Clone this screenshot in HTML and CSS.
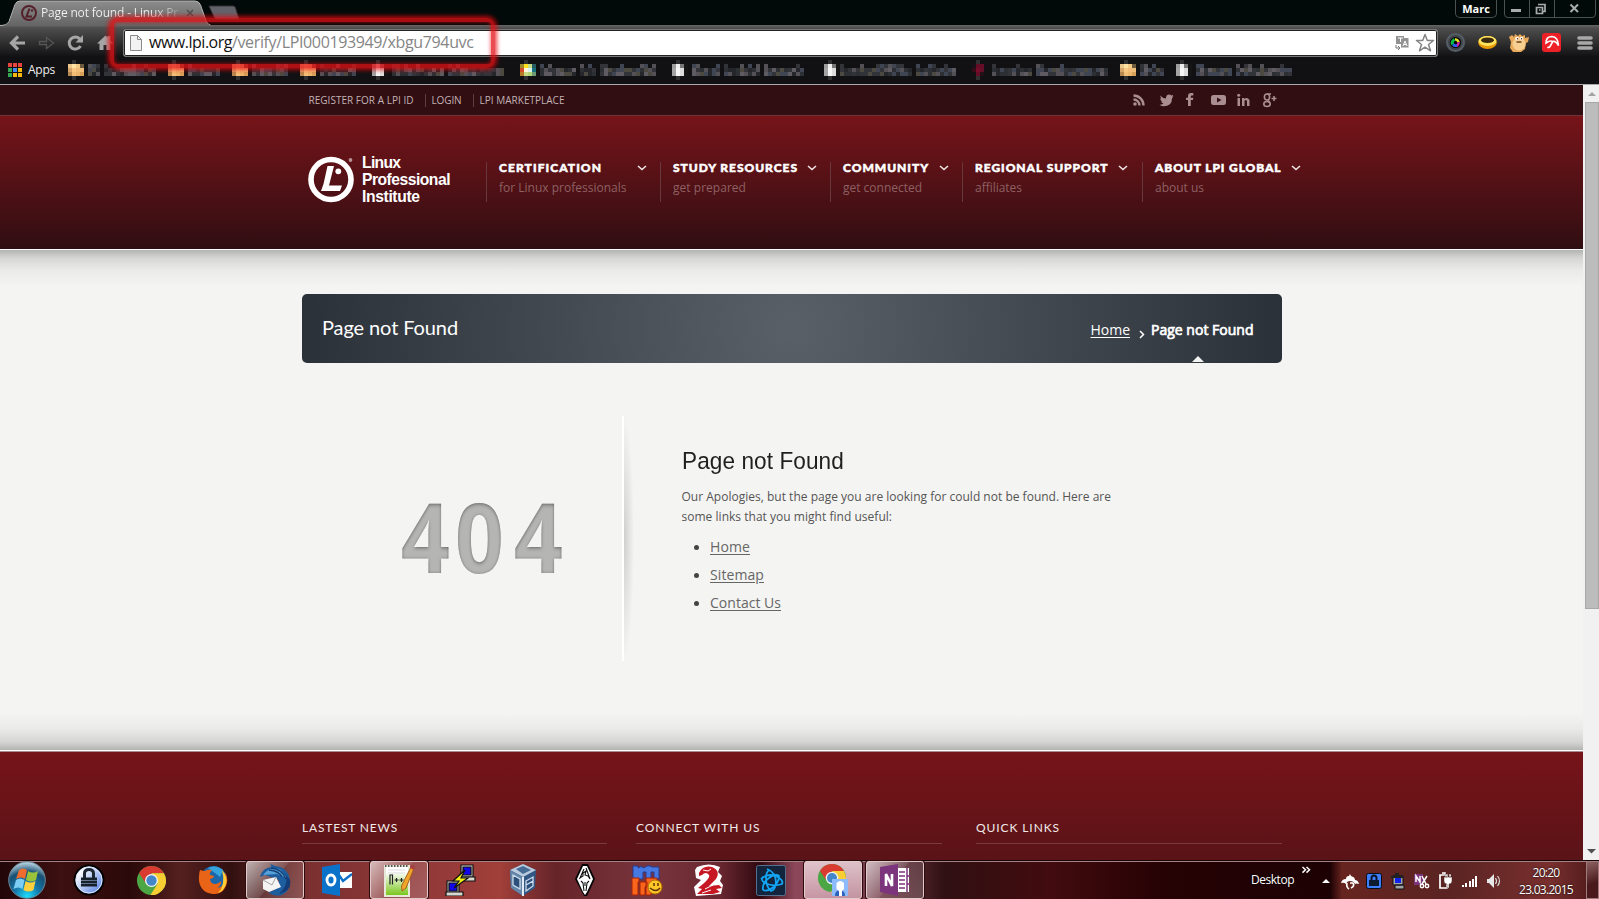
FILE: index.html
```html
<!DOCTYPE html>
<html lang="en">
<head>
<meta charset="utf-8">
<title>Page not found - Linux Professional Institute</title>
<link rel="stylesheet" href="styles.css">
</head>
<body>
<header class="browser">
  <div class="titlebar">
    <svg class="tabs" width="245" height="26" viewBox="0 0 245 26">
      <defs><linearGradient id="tabg" x1="0" y1="0" x2="0" y2="1"><stop offset="0" stop-color="#8c8c8c"/><stop offset="1" stop-color="#646464"/></linearGradient></defs>
      <path d="M209 6h24q2 0 2.500 2l3.500 11h-22q-2 0-3-2z" fill="#62626a" stroke="#333"/>
      <path d="M0 26q7 0 9-4l6-17q1.500-4 5-4h175q4 0 5.500 4l6 17q2 4 5 4z" fill="url(#tabg)"/>
      <path d="M0 25.500q7 0 9-4l6-17q1.500-3.500 5-3.500h175q4 0 5.500 4l6 17q2 3 4 3" fill="none" stroke="#b4b4b4"/>
      <circle cx="29" cy="13" r="7" fill="none" stroke="#54202a" stroke-width="2"/>
      <path d="M29.500 8.500l-3 8h5.500" fill="none" stroke="#54202a" stroke-width="2"/><circle cx="32" cy="10.500" r="1.200" fill="#54202a"/>
      <path d="M187 10l6 6m0-6l-6 6" stroke="#4b4b4b" stroke-width="1.400"/>
    </svg>
    <span class="tab-title" data-w="137">Page not found - Linux Pr</span>
    <span class="user">Marc</span>
    <svg class="winbtns" width="94" height="19" viewBox="0 0 94 19">
      <path d="M1.500 0v14q0 3.500 3.500 3.500h84q3.500 0 3.500-3.500V0M26.500 0v17M51.500 0v17" fill="none" stroke="#4b5050"/>
      <path d="M8 9h10v3H8z" fill="#a9acac"/>
      <path d="M35 4.500h7v7h-2.500M33.500 7.500h6v6h-6zM36 10h1.500" fill="none" stroke="#a9acac" stroke-width="1.700"/>
      <path d="M67.500 4.500l7.500 7.500m0-7.500L67.500 12" stroke="#a9acac" stroke-width="2"/>
    </svg>
  </div>
  <div class="toolbar">
    <svg class="navicons" width="113" height="33" viewBox="0 0 113 33" fill="none">
      <g stroke="#a6a6a6" stroke-width="3.200"><path d="M25 18H12M18 11.500L11.500 18l6.500 6.500"/></g>
      <g stroke="#555" stroke-width="1.300"><path d="M39.500 16.500h7v-4l7 5.500-7 5.500v-4h-7z"/></g>
      <path d="M80.500 21a6 6 0 1 1-.8-7" stroke="#a6a6a6" stroke-width="3"/><path d="M83 10v7.500h-7.500z" fill="#a6a6a6"/>
      <path d="M97 18.500l8.500-8 2 2V11h3v4.500l3 3h-3V25h-4v-5h-3v5h-4v-6.500z" fill="#a6a6a6"/>
    </svg>
    <div class="omnibox">
      <svg width="14" height="18" viewBox="0 0 14 18"><path d="M1.500 1.500h7l4 4v11h-11z" fill="#f2f2f2" stroke="#8b8b8b"/><path d="M8.500 1.500v4h4" fill="none" stroke="#8b8b8b"/></svg>
      <span class="url"><span class="host" data-w="83">www.lpi.org</span><span data-w="241.500">/verify/LPI000193949/xbgu794uvc</span></span>
      <svg class="omni-icons" width="42" height="20" viewBox="0 0 42 20">
        <path d="M1 3h8v2h4.500v9.500H6V11H1z" fill="#929292"/><path d="M3 5h5M5.500 5v4M8 13l2-5 2 5M9 11.500h2" stroke="#fff" fill="none"/><path d="M1 12v3h4m-2-2l2 2-2 2" stroke="#777" fill="none"/>
        <path d="M30 1.500l2.300 6h6.200l-5 4 2 6.300-5.500-3.700-5.500 3.700 2-6.300-5-4h6.200z" fill="#fff" stroke="#858585" stroke-width="1.500" stroke-linejoin="round"/>
      </svg>
    </div>
    <svg class="ext" width="160" height="33" viewBox="1439 0 160 33">
      <circle cx="1455.500" cy="17.500" r="8.500" fill="#3e4448" stroke="#555e66" stroke-width="2"/><circle cx="1455.500" cy="17.500" r="5.500" fill="#050505"/>
      <path d="M1452.500 19.500a4 4 0 0 1 2-5" stroke="#06c04a" stroke-width="3" fill="none"/><path d="M1455 14.200a4 4 0 0 1 3.500 3" stroke="#e0e020" stroke-width="2.500" fill="none"/><path d="M1458.500 17a4 4 0 0 1-2 4" stroke="#d01fa0" stroke-width="2.500" fill="none"/><path d="M1457 20.500a4 4 0 0 1-4-1" stroke="#2c64ff" stroke-width="2.500" fill="none"/>
      <ellipse cx="1487.500" cy="17.500" rx="9.300" ry="6.500" fill="#e89a08"/><ellipse cx="1487.500" cy="16" rx="9" ry="5" fill="#ffe45b"/><ellipse cx="1487.500" cy="15.300" rx="6.500" ry="2.800" fill="#3a2a10"/>
      <path d="M1511 17l-2-5 3-2 2 2 1-3 3 2 2-2 2 2 3-1v3l4-1-1 5-2 1-1 6-4 3h-8l-3-4z" fill="#e9a95b"/><ellipse cx="1519" cy="19" rx="6.500" ry="6.500" fill="#f8cf90"/><circle cx="1517" cy="13.500" r="1.700" fill="#fff"/><circle cx="1521.500" cy="13.500" r="1.700" fill="#fff"/><path d="M1517.500 13v1.500m4-1.500v1.500m-5 2.500h5" stroke="#6a4322" stroke-width="1.300"/>
      <rect x="1542" y="8" width="19" height="19" rx="3" fill="#ed1f27"/><path d="M1546 18q0-6.500 6-6.500 6 .5 6.500 9-3-5-5.500-4-3-1.500-7 1.500zM1552.500 17l-2.500 4.500q-1 1.500-2.500.5" fill="none" stroke="#fff" stroke-width="1.600"/>
      <path d="M1579 13h12m-12 5h12m-12 5h12" stroke="#a8a8a8" stroke-width="3.600" stroke-linecap="round"/>
    </svg>
  </div>
  <div class="bookmarks">
    <svg class="apps" width="14" height="14" viewBox="0 0 14 14"><path d="M0 0h4v4H0zM5 0h4v4H5zM10 0h4v4h-4z" fill="#e8453c"/><path d="M0 5h4v4H0zM0 10h4v4H0z" fill="#34a853"/><path d="M5 5h4v4H5z" fill="#3f8cf3"/><path d="M5 10h4v4H5zM10 5h4v4h-4zM10 10h4v4h-4z" fill="#f6b90c"/></svg>
    <span class="apps-label" data-w="27">Apps</span>
    <svg id="mosaic" width="1300" height="26" viewBox="60 58 1300 26" shape-rendering="crispEdges"></svg>
  </div>
  <div class="highlight"></div>
</header>

<div class="viewport">
  <main class="page">
    <div class="topbar">
      <nav class="toplinks"><a data-w="105">REGISTER FOR A LPI ID</a><a data-w="30">LOGIN</a><a data-w="85">LPI MARKETPLACE</a></nav>
      <svg class="social" width="150" height="16" viewBox="1131 92 150 16" fill="#a98d90">
        <circle cx="1135" cy="104" r="1.800"/><path d="M1133.500 99.500a6 6 0 0 1 6 6M1133.500 95.500a10 10 0 0 1 10 10" fill="none" stroke="#a98d90" stroke-width="2.400"/>
        <path d="M1160 95.500q3 3 6 3 0-4 3-4 1.500 0 2.300 1l2-.8-1 2 1.200-.2-1.500 1.700q0 7.500-7.500 8-3 0-5-1.500 2.500 0 4-1.200-2-.3-2.500-2h1.200q-2-1-2-3h1z"/>
        <path d="M1188 106v-6h-2v-2.300h2v-1.500q0-3.200 3-3.200h2.300v2.400h-1.500q-1 0-1 1v1.300h2.500l-.3 2.300h-2.200v6z"/>
        <path fill-rule="evenodd" d="M1213.500 95h10q2.500 0 2.500 2.500v5q0 2.500-2.500 2.500h-10q-2.500 0-2.500-2.500v-5q0-2.500 2.500-2.500zM1217 97.500v5l4.500-2.500z"/>
        <path d="M1237.500 98h2.500v8h-2.500zM1242 98h2.300v1q3-2.300 5.200 1v6h-2.500v-4.500q-.5-2.500-2.500-.7v5.200h-2.500z"/><circle cx="1238.700" cy="95.300" r="1.500"/>
        <g fill="none" stroke="#a98d90" stroke-width="1.600"><ellipse cx="1267" cy="97" rx="2.600" ry="3"/><ellipse cx="1267" cy="104" rx="3.200" ry="2.500"/><path d="M1267 94h4M1268 100l1.500 2.500M1271.500 98.500h5m-2.500-2.500v5"/></g>
      </svg>
    </div>
    <div class="header">
      <svg class="logo" width="148" height="50" viewBox="306 154 148 50">
        <circle cx="331" cy="179.500" r="20" fill="none" stroke="#fff" stroke-width="5.600"/>
        <path d="M327.500 166h6.500l-5 19.500h13l-2 5.500h-19l2.500-7z" fill="#fff"/><circle cx="338.300" cy="171.300" r="2.900" fill="#fff"/>
        <circle cx="350.500" cy="160" r="1.900" fill="#b78f92" />
        <g class="logotext"><text x="362" y="168" textLength="39">Linux</text><text x="362" y="185" textLength="88.500">Professional</text><text x="362" y="202" textLength="58">Institute</text></g>
      </svg>
      <nav class="menu">
        <a class="m1"><b><i data-w="103">CERTIFICATION</i><svg width="10" height="6"><path d="M1 1l4 3.500L9 1"/></svg></b><span data-w="127.500">for Linux professionals</span></a>
        <a class="m2"><b><i data-w="125">STUDY RESOURCES</i><svg width="10" height="6"><path d="M1 1l4 3.500L9 1"/></svg></b><span data-w="73">get prepared</span></a>
        <a class="m3"><b><i data-w="86">COMMUNITY</i><svg width="10" height="6"><path d="M1 1l4 3.500L9 1"/></svg></b><span data-w="79">get connected</span></a>
        <a class="m4"><b><i data-w="133.500">REGIONAL SUPPORT</i><svg width="10" height="6"><path d="M1 1l4 3.500L9 1"/></svg></b><span data-w="47">affiliates</span></a>
        <a class="m5"><b><i data-w="126.500">ABOUT LPI GLOBAL</i><svg width="10" height="6"><path d="M1 1l4 3.500L9 1"/></svg></b><span data-w="49">about us</span></a>
      </nav>
    </div>
    <section class="content">
      <div class="banner">
        <h1 data-w="136">Page not Found</h1>
        <div class="crumbs"><a data-w="39.500">Home</a><svg width="6" height="9"><path d="M1 1l3.500 3.500L1 8" fill="none" stroke="#fff" stroke-width="1.500"/></svg><strong data-w="102.500">Page not Found</strong></div>
      </div>
      <div class="error">
        <svg class="big404" width="180" height="160" viewBox="392 454 180 160">
          <defs><filter id="inset" x="-5%" y="-5%" width="110%" height="110%"><feComponentTransfer in="SourceAlpha" result="inv"><feFuncA type="table" tableValues="1 0"/></feComponentTransfer><feGaussianBlur in="inv" stdDeviation="2"/><feOffset dx="0" dy="1"/><feComposite in2="SourceAlpha" operator="in" result="sh"/><feFlood flood-color="#4e4e4c"/><feComposite in2="sh" operator="in" result="s2"/><feMerge><feMergeNode in="SourceGraphic"/><feMergeNode in="s2"/></feMerge></filter></defs>
          <g transform="translate(401 573) scale(.88 1)" filter="url(#inset)"><text x="0" y="0">4</text><text x="61.500" y="0">0</text><text x="128.500" y="0">4</text></g>
        </svg>
        <div class="rule"></div>
        <div class="message">
          <h2><span data-w="174">Page not Found</span></h2>
          <p><span data-w="429.500">Our Apologies, but the page you are looking for could not be found. Here are</span><br><span data-w="210.500">some links that you might find useful:</span></p>
          <ul><li><a data-w="40">Home</a></li><li><a data-w="54">Sitemap</a></li><li><a data-w="71">Contact Us</a></li></ul>
        </div>
      </div>
    </section>
    <footer class="footer"><h3><span data-w="96">LASTEST NEWS</span></h3><h3><span data-w="124.500">CONNECT WITH US</span></h3><h3><span data-w="84">QUICK LINKS</span></h3></footer>
  </main>
  <div class="scrollbar"><svg width="16" height="17"><path d="M5 11l4-4 4 4z" fill="#a3a3a3"/></svg><div class="thumb"></div><svg width="16" height="17"><path d="M4 6h9l-4.500 4.500z" fill="#505050"/></svg></div>
</div>

<div class="taskbar">
  <div class="tasks">
    <div class="task"><svg viewBox="0 0 40 38" width="40" height="38"><defs><radialGradient id="orb" cx=".5" cy=".95" r=".9"><stop offset="0" stop-color="#1ee0ff"/><stop offset=".4" stop-color="#1576a8"/><stop offset=".75" stop-color="#174f72"/><stop offset="1" stop-color="#a9c7d6"/></radialGradient></defs><circle cx="20" cy="19" r="18.300" fill="url(#orb)" stroke="#6b8797" stroke-width="1"/><path d="M12 9q4-3 8 0l-2 9q-4-3-9 0z" fill="#ef6b2e"/><path d="M21 10q5 3 10 0l-2 9q-5 3-10 0z" fill="#9ac33c"/><path d="M9 19q4-3 8.500 0l-2 9q-4-3-9 0z" fill="#7ccdf4"/><path d="M18.500 20q5 3 10 0l-2 9q-5 3-10 0z" fill="#ffd03c"/></svg></div>
    <div class="task"><svg viewBox="0 0 32 32" width="32" height="32"><defs><linearGradient id="kp" x2="1" y2="1"><stop offset="0.200" stop-color="#fff"/><stop offset="1" stop-color="#3f6fe0"/></linearGradient></defs><circle cx="16" cy="16" r="14.500" fill="url(#kp)" stroke="#000" stroke-width="2"/><circle cx="16" cy="16" r="13" fill="none" stroke="#dce6ff"/><path d="M11.500 14v-4.500q0-4 4.500-4t4.500 4V14" fill="none" stroke="#1c2733" stroke-width="3"/><path d="M8 13.500h16v2.700H8zm0 3.200h16v2.700H8zm0 3.200h16v2.700H8z" fill="#16202b"/></svg></div>
    <div class="task"><svg viewBox="0 0 28 28" width="29" height="29"><use href="#chrome"/></svg></div>
    <div class="task"><svg viewBox="0 0 30 30" width="30" height="30"><circle cx="15.500" cy="14" r="13" fill="#1d67a8"/><path d="M10 3q8-4 15 2l-3 7-5-4z" fill="#35a3dc"/><path d="M2 5q3 1 5 1 3-2 7-1-3 3-2 5l4 1q0 2-4 3 0 5 6 5 4-1 5-3 1 4-4 7 10-1 8-16 4 7 1 14-4 9-13 8-12-1-14-13Q.500 9 2 5z" fill="#ea6417"/><path d="M24 5q6 7 4 14-2 7-8 9 8-8 4-23z" fill="#ffce35"/></svg></div>
    <div class="task active"><svg viewBox="0 0 32 32" width="32" height="32"><path d="M1 13Q4 3 13 3q-2-1-1-3l4 2q13 1 15 14 1 10-8 15-8 2-14-3 10-1 11-12L6 11z" fill="#1e5d9e"/><path d="M4 11q8-10 18-5l6 8-10-4z" fill="#56a2d8"/><path d="M12 4q11 1 15 11M10 6q10 1 13 7" fill="none" stroke="#133f77" stroke-width="1.300"/><path d="M25 8q7 10-5 22 13-3 11-14z" fill="#143d78"/><path d="M4 16l13-3 5 10-12 5-6-3z" fill="#f4f4f4"/><path d="M4 16l9 5 4-8" fill="none" stroke="#a2a2a2"/></svg></div>
    <div class="task"><svg viewBox="0 0 30 32" width="30" height="32"><path d="M17 8h13v16H17z" fill="#fff"/><path d="M17 11l4 6 9-7" fill="none" stroke="#0b6fc7" stroke-width="2.300"/><path d="M0 3l18-3v32L0 29z" fill="#0b72c9"/><ellipse cx="9" cy="16" rx="4" ry="5" fill="none" stroke="#fff" stroke-width="2.800"/></svg></div>
    <div class="task active"><svg viewBox="0 0 32 33" width="32" height="33"><defs><linearGradient id="np" x2="0" y2="1"><stop offset=".2" stop-color="#fff"/><stop offset="1" stop-color="#75c414"/></linearGradient></defs><path d="M2 2h24v30H2z" fill="url(#np)" stroke="#e8e8d8" stroke-width="2"/><path d="M2 2h23" stroke="#555" stroke-dasharray="1.500 1.500" stroke-width="2"/><path d="M5 6h17m-17 3h17" stroke="#ddd"/><path d="M7 20.500V11h2.500v9.500M11.500 16h4m-2-2v4M16.500 16h4m-2-2v4" fill="none" stroke="#222" stroke-width="1.200"/><path d="M18.500 22L28 3l3 1-8 20-4 3z" fill="#f2a52b" stroke="#a8641b"/><path d="M28 1l4 1-1 4-4-2z" fill="#a84040"/></svg></div>
    <div class="task"><svg viewBox="0 0 32 32" width="32" height="32"><g stroke="#111" stroke-width="1.200"><path d="M16 1h12v12H16zM2 17h12v12H2z" fill="#d8d8d0"/><path d="M18 3h8v8h-8zM4 19h8v8H4z" fill="#1207e8"/><path d="M15 13h15v4H15zM1 28h17v4H1z" fill="#d8d8d0"/><path d="M20 6L8 17h6L9 24l14-10h-7z" fill="#f4f013"/></g></svg></div>
    <div class="task"><svg viewBox="0 0 28 32" width="28" height="32"><path d="M14 0l13 6-1 18-12 8L2 24 1 6z" fill="#315782"/><path d="M14 0l13 6-13 7L1 6z" fill="#b9cbdc"/><path d="M7 5l7-3 8 4-8 4z" fill="#466b95"/><path d="M1 6l13 7v19L2 24z" fill="#6484a8"/><path d="M14 13v19" stroke="#e4edf5" stroke-width="2"/><path d="M4 11l7 4v10l-7-4zM17 17l7-4v4l-7 4 7-4v5l-7 5z" fill="#2d507a" stroke="#cbdcec" stroke-width="1.300"/></svg></div>
    <div class="task"><svg viewBox="0 0 20 32" width="20" height="32"><path d="M7 0h6l7 15-8 17H9L0 15z" fill="#050505"/><path d="M8 2h4l6 13-6 13-2 3-2-3-6-13z" fill="#fff"/><path d="M9 5l-4 9 3-2v-3l3-2-1 4 3 1 2 3-4-11M6 17l2 2 1 8m5-10l-2 2-1 8M10 18v4" stroke="#111" fill="none" stroke-width="1.100"/></svg></div>
    <div class="task"><svg viewBox="0 0 32 32" width="32" height="32"><path d="M2 15V2h5v2q3-3 6 0 4-4 8-1h7v12h-5V8h-3v7h-5V8h-3v7z" fill="#4779e3" stroke="#263b91"/><path d="M1 14h7v4H7v13H1zM9 18h7v5h-2v8H9zM15 14h11v6h-6v11h-5z" fill="#f9651a" stroke="#a82208"/><circle cx="24" cy="23" r="7" fill="#ffc629" stroke="#b16e00"/><path d="M19 24q6 5 10 0M23 19v3m4-3v3" stroke="#5b3200" stroke-width="1.500" fill="none"/></svg></div>
    <div class="task"><svg viewBox="0 0 30 32" width="30" height="32"><path d="M3 3q12-5 23 0l-2 5 4 4-2 5 3 4-2 9-25 2-2-9 7-7-5-2-1-8z" fill="#fff"/><path d="M5 9q4-8 13-6 9 4 4 12l-7 7 10-1 3 3-6 1 4 3-7 2H3l5-5-4-1q13-10 11-13-3-4-7 0l-3 1z" fill="#c61722"/><path d="M9 6l5 1 3-2m-6 20l8-4m-11 8l9-3" stroke="#fff" fill="none"/></svg></div>
    <div class="task"><svg viewBox="0 0 30 31" width="30" height="31"><rect x=".5" y=".5" width="29" height="30" rx="2" fill="#12253c" stroke="#55708e"/><g fill="none" stroke="#13a4f3" stroke-width="1.800"><path d="M11 4q9 3 9 14-1 7-5 8-5-4-5-13 0-7 4-8M5 14q6-6 15-3 8 4 6 8-9 3-17-1-5-3-2-6M7 25q-1-7 6-12 7-5 10-2 0 7-7 12-5 4-9 2"/></g></svg></div>
    <div class="task active bright"><svg viewBox="0 0 30 32" width="30" height="32"><g id="chrome"><circle cx="14" cy="14" r="14" fill="#4ba643"/><path d="M2 7q4-7 12-7t12 7H14l-6 9z" fill="#d93b30"/><path d="M26 7q5 10-2 17-5 5-11 4l7-11-6-10z" fill="#f8ce32"/><circle cx="14" cy="14" r="6.300" fill="#f3f3f3"/><circle cx="14" cy="14" r="5" fill="#4386ca"/></g><path d="M14 15h16v17H14z" fill="#8dbafa"/><path d="M17 32q0-6 5-5.500 5-.5 5 5.500z" fill="#2b63b8"/><path d="M18.500 19q4-4 7.500 0v6l-2 2v5h-3v-5l-2.500-2z" fill="#fff"/></svg></div>
    <div class="task active"><svg viewBox="0 0 30 32" width="30" height="32"><path d="M17 4h12v24H17z" fill="#fff"/><path d="M19 8h6m-6 4h6m-6 4h6m-6 4h6m-6 4h6M27 4v24M27 12h3m-3 8h3" stroke="#7d327f" stroke-width="1.500"/><path d="M0 3l18-3v32L0 28z" fill="#7c347d"/><path d="M6 22V10l6 12V10" fill="none" stroke="#fff" stroke-width="2.600"/></svg></div>
  </div>
  <div class="tray">
    <span class="desk" data-w="43">Desktop</span>
    <svg width="206" height="38" viewBox="1300 861 206 38">
      <path d="M1302.500 867l3 2.800-3 2.800m4-5.600l3 2.800-3 2.800" fill="none" stroke="#fff" stroke-width="1.500"/>
      <path d="M1322 883h8l-4-4z" fill="#fff"/>
      <path d="M1341 883q1-4 5-4 0-3 3-3l1-2 1 2q4 1 4 4 3 0 4 4-3-1-4 0-1-3-5-3-3 0-4 3-2-2-5-1z" fill="#fff"/><path d="M1347 883q-1 4 2 6m1-6h3q2 3-2 5" stroke="#fff" fill="none" stroke-width="1.700"/>
      <rect x="1366.500" y="873.500" width="15" height="15" rx="2" fill="#3d7fff" stroke="#070b18"/><path d="M1371.500 880v-2q0-2.500 2.500-2.500t2.500 2.500v2" fill="none" stroke="#081526" stroke-width="2"/><path d="M1369 880h10v6h-10z" fill="#0d1b31"/>
      <path d="M1393 876h10v9h-10zM1395 885h9v4h-9z" fill="#a1a3a5" stroke="#111"/><path d="M1395 878h6v5h-6z" fill="#1021ef"/><path d="M1391 876l4-1v-2h4v2l5 1v2h-13z" fill="#222"/>
      <path d="M1414 874h9v11h-9z" fill="#7c347d"/><path d="M1416 882v-6l4 6v-6M1422 876l4 8m1-8l-5 8" fill="none" stroke="#fff" stroke-width="1.500"/><circle cx="1422" cy="886" r="1.700" fill="none" stroke="#fff" stroke-width="1.500"/><circle cx="1427" cy="886" r="1.700" fill="none" stroke="#fff" stroke-width="1.500"/>
      <path d="M1440 875h7v13h-7zM1442 873h3v2" fill="none" stroke="#fff" stroke-width="1.700"/><path d="M1444 877h8v4q0 3-3 3v4h-2v-4q-3 0-3-3zM1445 874h2v3h-2zM1449 874h2v3h-2z" fill="#fff" stroke="#4a2421" stroke-width=".5"/>
      <path d="M1462 885h2v2h-2zM1465 883h2v4h-2zM1469 881h2v6h-2zM1472 879h2v8h-2zM1475 876h2v11h-2z" fill="#fff"/>
      <path d="M1487 879h2l5-5v14l-5-5h-2z" fill="#e8e8e8"/><path d="M1495.500 878q2 3 0 6m2-8q4 5 0 10" fill="none" stroke="#ddd" stroke-width="1.200"/>
    </svg>
    <div class="clock"><span data-w="27">20:20</span><span data-w="54">23.03.2015</span></div>
    <div class="peek"></div>
  </div>
</div>
<script src="main.js"></script>
</body>
</html>
```

FILE: styles.css
```css
* { box-sizing: border-box; }
body { margin: 0; width: 1599px; height: 899px; overflow: hidden; display: flex; flex-direction: column; font-family: "Open Sans", sans-serif; background: #f4f4f2; }
svg { display: block; flex: none; }
h1, h2, h3, p, ul { margin: 0; padding: 0; font-weight: 400; }
span, a, i { white-space: nowrap; }

.browser { position: relative; height: 85px; flex: none; background: #111113; border-bottom: 1px solid #a9a9a9; }
.titlebar { height: 25px; display: flex; background: #020a09; }
.tabs { margin-right: -204px; }
.tab-title { position: relative; font-size: 12px; line-height: 25px; width: 146px; background: linear-gradient(90deg, #f3f3f3 112px, #85858500 146px); -webkit-background-clip: text; background-clip: text; color: transparent; }
.user { margin-left: auto; width: 42px; height: 18px; border: 1px solid #4b5050; border-top: 0; border-radius: 0 0 5px 5px; color: #fff; font: 700 11px/17px "Open Sans", sans-serif; text-align: center; }
.winbtns { margin: 0 2px 0 6px; }
.toolbar { height: 34px; display: flex; background: linear-gradient(#666 0, #4e4e4e 3px, #111113 32px); }
.navicons { margin: 0 10px 0 0; }
.omnibox { width: 1315px; height: 28px; margin-top: 4px; display: flex; align-items: center; background: #fff; border: 1px solid #777; box-shadow: inset 0 0 0 1px #222; border-radius: 3px; padding-left: 5px; }
.url { margin-left: 6px; font-size: 16px; line-height: 22px; padding-bottom: 2px; color: #858585; }
.host { color: #111; }
.omni-icons { margin-left: auto; }
.ext { margin-left: 1px; }
.bookmarks { display: flex; height: 25px; align-items: flex-start; }
.apps { margin: 4px 6px 0 8px; }
.apps-label { color: #eee; font-size: 12px; line-height: 22px; width: 32px; }
#mosaic { margin-top: -1px; }
.highlight { position: absolute; z-index: 2; left: 110px; top: 18px; width: 385px; height: 50px; border: 4px solid rgba(225, 18, 22, .75); border-radius: 8px; box-shadow: 0 0 4px 2px rgba(235, 10, 15, .75), inset 0 0 4px rgba(235, 10, 15, .75); }

.viewport { height: 775px; flex: none; display: flex; }
.page { width: 1583px; display: flex; flex-direction: column; }
.topbar { height: 31px; flex: none; background: #310e12; border-bottom: 1px solid #713337; display: flex; align-items: center; padding: 0 302px 0 308.5px; justify-content: space-between; }
.toplinks { display: flex; font-size: 10px; line-height: 13px; color: #c2b2b4; }
.toplinks a + a { border-left: 1px solid #5e3d41; padding-left: 6px; margin-left: 11px; }
.header { height: 134px; flex: none; background: linear-gradient(#761419, #300e12); border-bottom: 1px solid #fff; display: flex; padding: 38px 0 0 306px; }
.logotext { font: 700 15.7px "Liberation Sans", sans-serif; fill: #fff; }
.menu { display: flex; margin: 8px 0 0 32px; height: 40px; }
.menu a { border-left: 1px solid #67393d; padding-left: 12px; display: flex; flex-direction: column; }
.menu b { display: flex; align-items: center; justify-content: space-between; height: 15px; margin-top: -1px; font: 900 12px/13px Lato, sans-serif; -webkit-text-stroke: .5px #fff; color: #fff; }
.menu i { font-style: normal; margin-top: -2px; }
.menu svg { margin-top: -2px; }
.menu path { fill: none; stroke: #f0e5e5; stroke-width: 1.6; }
.menu span { color: #8d6064; font-size: 12px; line-height: 16px; margin-top: 4px; }
.m1 { width: 174px; padding-right: 13px; }
.m2 { width: 170px; padding-right: 13px; }
.m3 { width: 132px; padding-right: 13px; }
.m4 { width: 180px; padding-right: 14px; }
.m5 { width: 159px; }
.content { height: 501px; flex: none; padding: 44px 301px 0 302px; background: linear-gradient(#b3b3b0 0, #d5d5d3 8px, #eaeae8 20px, #f4f4f2 36px, #f4f4f2 463px, #eaeae8 479px, #d5d5d3 492px, #b3b3b0 500px, #fff 500px); }
.banner { position: relative; height: 69px; display: flex; justify-content: space-between; border-radius: 5px; padding: 0 28.5px 0 20px; color: #fff; background: radial-gradient(circle at 50% 50%, #596068, #2b3139 490px); }
.banner::after { content: ""; position: absolute; left: 890px; bottom: 1px; border: 6px solid transparent; border-top: 0; border-bottom-color: #f4f4f2; }
.banner h1 { font: 400 20px/24px Lato, sans-serif; margin-top: 21px; white-space: nowrap; }
.crumbs { display: flex; font-size: 14px; line-height: 20px; margin-top: 26px; }
.crumbs a { text-decoration: underline; text-underline-offset: 2px; }
.crumbs svg { margin: 10px 6px 0 9px; }
.crumbs strong { font-weight: 400; -webkit-text-stroke: .7px #fff; white-space: nowrap; }
.error { display: flex; margin-top: 53px; height: 245px; padding-left: 90px; }
.big404 { margin-top: 38px; }
.big404 text { font: 700 97px "Open Sans", sans-serif; fill: #b5b5b3; }
.rule { width: 12px; height: 245px; margin-left: 50px; border-left: 2px solid #fff; background: radial-gradient(ellipse 10px 122px at 0 50%, #cfcfcd, #f4f4f200); }
.message { margin-left: 47.5px; padding-top: 32px; }
.message h2 { font: 400 24.3px/26px "Liberation Sans", sans-serif; color: #1f1f1f; width: 175px; white-space: nowrap; transform: scaleX(.93); transform-origin: 0 0; }
.message p { font-size: 12px; line-height: 20px; color: #555; margin-top: 13px; }
.message ul { margin-top: 6px; padding-left: 28.5px; list-style: none; font-size: 14px; line-height: 28px; color: #666; }
.message li { display: flex; }
.message li::before { content: ""; width: 5px; height: 5px; border-radius: 50%; background: #444; margin: 12px 11px 0 -16px; }
.message li a { text-decoration: underline; text-underline-offset: 2px; }
.footer { height: 109px; flex: none; border-top: 1px solid #a9898b; background: linear-gradient(#761419, #5a1317); display: grid; grid-template-columns: 305px 29px 306px 34px 306px; padding: 68px 0 0 302px; }
.footer h3 { height: 24px; border-bottom: 1px solid #7b3a3f; font: 400 12px/16px Lato, sans-serif; color: #f1e9e9; }
.footer h3:nth-child(2) { grid-column: 3; }
.footer h3:nth-child(3) { grid-column: 5; }
.scrollbar { width: 16px; background: #f1f1f1; display: flex; flex-direction: column; }
.thumb { width: 14px; height: 507px; margin: 0 0 auto 2px; background: #bcbcbc; border: 1px solid #a8a8a8; }

.taskbar { height: 39px; flex: none; display: flex; justify-content: space-between; border-top: 1px solid #160204; box-shadow: inset 0 1px #a78184; background: linear-gradient(90deg, #210608 0, #3d1011 60px, #2a0809 130px, #54201f 180px, #321010 230px, #7b3030 310px, #923939 430px, #a13f39 500px, #662429 555px, #79353d 650px, #692731 720px, #31090f 760px, #8c475a 795px, #713a47 880px, #301012 945px, #420b0f 1050px, #260204 1160px, #1c0103 1330px, #67241f 1342px, #5a2422 1450px, #782f2e 1550px, #4b1719 1599px); }
.tasks { display: flex; gap: 4px; margin-left: -2px; }
.task { width: 58px; height: 38px; display: flex; align-items: center; justify-content: center; }
.task.active { border: 1px solid #e3c9c9; border-radius: 3px; box-shadow: 0 0 0 1px #2d0a0c; background: linear-gradient(130deg, #ffffffa8, #ffffff38 48%, #ffffff20 50%, #ffffff30); }
.task.bright { background: linear-gradient(#f4dfe4d0, #e4bac6b0); }
.tray { display: flex; color: #fff; font-size: 12px; text-shadow: 0 0 2px #000; }
.desk { line-height: 37px; width: 49px; }
.clock { width: 80px; display: flex; flex-direction: column; align-items: center; line-height: 17px; padding-top: 3px; }
.peek { width: 13px; height: 38px; border: 1px solid #a07b7c; background: linear-gradient(160deg, #8c6061, #49191b 60%); }
```

FILE: main.js
```js
// Justify labels to their design widths through letter spacing.
document.querySelectorAll('[data-w]').forEach(function (el) {
  var r = document.createRange();
  r.selectNodeContents(el);
  var w = r.getBoundingClientRect().width;
  if (el.closest('h2')) w = w / 0.93;
  var n = el.textContent.length;
  el.style.letterSpacing = ((parseFloat(el.dataset.w) - w) / n).toFixed(3) + 'px';
});

// Pixelated bookmark entries: [icon kind, icon x, label start, label end, gaps].
var items = [
  ['folder', 68, 88, 156, [100]], ['folder', 168, 188, 220, []],
  ['folder', 232, 252, 288, []], ['folder', 300, 320, 356, []],
  ['page', 372, 392, 504, [444]], ['color', 520, 540, 656, [576, 596]],
  ['page', 672, 692, 804, [720, 760]], ['page', 824, 840, 956, [912]],
  ['red', 972, 992, 1108, [1032]], ['folder', 1120, 1140, 1164, []],
  ['page', 1176, 1196, 1292, [1232]]
];
var icons = {
  folder: ['#eac68b', '#ffe1a2', '#f3c987', '#6d5a3c', '#d8a66a', '#f9c981', '#f2be77', '#efbd79', '#b8894f', '#f3bf75', '#ecb66c', '#d7a05a'],
  page: ['#9d9d9d', '#efefef', '#777', '#151515', '#a5a5a5', '#f6f6f6', '#ddd', '#151515', '#a3a3a3', '#f4f4f4', '#ddd', '#151515'],
  color: ['#a08c2c', '#ffe21c', '#c6dc87', '#275c63', '#d24d25', '#fff5dc', '#d9f2ee', '#16727c', '#b77b27', '#c6dc87', '#b2d477', '#6c9a71'],
  red: ['#1a1018', '#650c26', '#650c26', '#151018', '#350b18', '#750d2a', '#62102a', '#111113', '#111113', '#650c26', '#231018', '#111113']
};
var tones = ['#33343a', '#545156', '#3f4552', '#4c4940', '#2c3035', '#5e5c62', '#24262b'];
var out = '', seed = 7;
function cell(x, y, c) { out += '<rect x="' + x + '" y="' + y + '" width="4" height="4" fill="' + c + '"/>'; }
function rnd() { seed = (seed * 1103515245 + 12345) % 2147483648; return seed / 2147483648; }
items.forEach(function (it) {
  icons[it[0]].forEach(function (c, i) { cell(it[1] + i % 4 * 4, 64 + Math.floor(i / 4) * 4, c); });
  cell(it[1] + 4, 60, '#303030'); cell(it[1] + 4, 76, '#303030');
  for (var x = it[2]; x < it[3]; x += 4) {
    if (it[4].indexOf(x) >= 0) continue;
    var first = x === it[2] || it[4].indexOf(x - 4) >= 0;
    if (first || rnd() > .75) cell(x, 64, tones[Math.floor(rnd() * 3)]);
    cell(x, 68, tones[Math.floor(rnd() * 7)]);
    cell(x, 72, tones[Math.floor(rnd() * 7)]);
  }
});
document.getElementById('mosaic').innerHTML = out;
```
